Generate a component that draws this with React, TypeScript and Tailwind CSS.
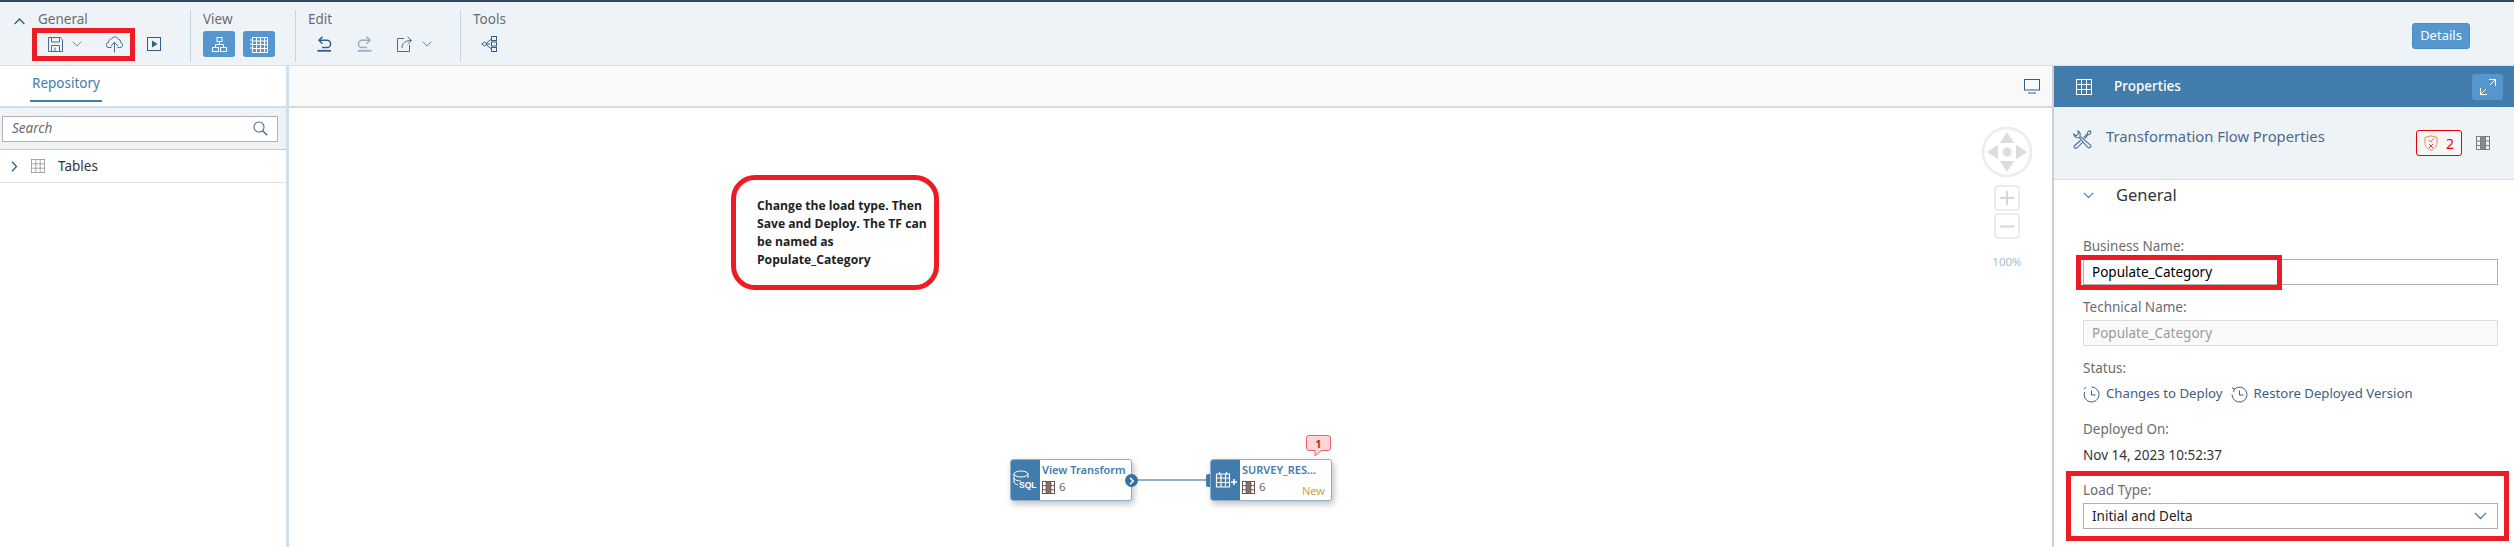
const ff = "font-['Noto_Sans','Open_Sans',sans-serif]";

function Save() {
  return (
    <svg width="15" height="15" viewBox="0 0 15 15" fill="none" stroke="#4a6f94" strokeWidth="1">
      <path d="M.5.500h12l2 2v12H.5z" />
      <path d="M3.500.500v4.500h8V.500M3.500 14.500V8.500h8v6M7 10.500v4" />
    </svg>
  );
}
function Chevron({ c = "#6b8bab", w = 10 }: { c?: string; w?: number }) {
  return (
    <svg width={w} height={w * 0.6} viewBox="0 0 10 6" fill="none" stroke={c} strokeWidth="1">
      <path d="M.7.700 5 5l4.300-4.300" />
    </svg>
  );
}
function Cloud() {
  return (
    <svg width="17" height="17" viewBox="0 0 17 17" fill="none" stroke="#4a6f94" strokeWidth="1">
      <path d="M5.500 11.500H3a2.500 2.500 0 0 1-.5-5A3 3 0 0 1 5.500 3a3.500 3.500 0 0 1 6.500 0 3 3 0 0 1 2.500 3.500 2.500 2.500 0 0 1-1 5h-2" />
      <path d="M8.500 16.500V6.500M5 10l3.500-3.500L12 10" />
    </svg>
  );
}
function Run() {
  return (
    <svg width="14" height="14" viewBox="0 0 14 14" fill="none">
      <rect x=".5" y=".5" width="13" height="13" stroke="#2f5f8c" />
      <path d="M5 3.500 10.500 7 5 10.500z" fill="#2f5f8c" />
    </svg>
  );
}
function OrgChart() {
  return (
    <svg width="15" height="15" viewBox="0 0 15 15" fill="none" stroke="white" strokeWidth="1">
      <rect x="5" y=".5" width="5" height="4" />
      <rect x=".5" y="10.500" width="6" height="4" />
      <rect x="8.500" y="10.500" width="6" height="4" />
      <path d="M7.500 4.500v3M3.500 10.500v-3h8v3" />
    </svg>
  );
}
function GridIcon({ c = "white", s = 16 }: { c?: string; s?: number }) {
  return (
    <svg width={s} height={s} viewBox="0 0 16 16" fill="none" stroke={c} strokeWidth="1">
      <rect x=".5" y=".5" width="15" height="15" />
      <path d="M5.500.500v15M10.500.500v15M.5 5.500h15M.5 10.500h15" />
    </svg>
  );
}
function TableNotes() {
  return (
    <svg width="18" height="17" viewBox="0 0 18 17" fill="none" stroke="white">
      <path d="M2.500 1.500h15v15h-15zM2.500 5h15M2.500 8.500h15M2.500 12.500h15M6.500 1.500v15M10.500 1.500v15M14.500 1.500v15" />
      <path d="M1 3v2M1 7v2M1 11v2" />
    </svg>
  );
}
function Undo() {
  return (
    <svg width="15" height="16" viewBox="0 0 15 16" fill="none" stroke="#2f5f8c" strokeWidth="1.500">
      <path d="M5.500.800 2 4.300l3.500 3.500" />
      <path d="M2 4.300h8a3.600 3.600 0 0 1 0 7.200H5" />
      <path d="M.5 14.800h13.500" strokeWidth="1.800" />
    </svg>
  );
}
function Redo() {
  return (
    <svg width="15" height="16" viewBox="0 0 15 16" fill="none" stroke="#94aec5" strokeWidth="1.500">
      <path d="M9.500.800 13 4.300 9.500 7.800" />
      <path d="M13 4.300H5a3.600 3.600 0 0 0 0 7.200h5" />
      <path d="M1 14.800h13.500" strokeWidth="1.800" />
    </svg>
  );
}
function Share() {
  return (
    <svg width="16" height="16" viewBox="0 0 16 16" fill="none" stroke="#4a6f94">
      <path d="M7 2.500H.5v13h12V9" />
      <path d="M5 12c0-4.500 3-7.500 9-7.500M10.500.800 14.500 4.500l-4 3.700" />
    </svg>
  );
}
function Lineage() {
  return (
    <svg width="16" height="16" viewBox="0 0 16 16" fill="none" stroke="#2f5f8c">
      <path d="M.8 8 3.500 6 6.200 8 3.500 10zM6.200 8h3" />
      <rect x="10.500" y=".5" width="5" height="4" />
      <rect x="10.500" y="6" width="5" height="4" />
      <rect x="10.500" y="11.500" width="5" height="4" />
      <path d="M5.500 7 10.500 3M5.500 9l5 4" />
    </svg>
  );
}
function Search() {
  return (
    <svg width="15" height="15" viewBox="0 0 15 15" fill="none" stroke="#4a6f94" strokeWidth="1.100">
      <circle cx="6" cy="6" r="5" />
      <path d="m9.700 9.700 4.500 4.500" strokeWidth="1.500" />
    </svg>
  );
}
function Monitor() {
  return (
    <svg width="16" height="15" viewBox="0 0 16 15" fill="none" stroke="#2f5f8c">
      <rect x=".5" y=".5" width="15" height="10.500" />
      <path d="M4 14h8" />
    </svg>
  );
}
function Expand() {
  return (
    <svg width="16" height="16" viewBox="0 0 16 16" fill="none" stroke="white">
      <path d="M9 .5h6.500V7M15.500.5 10 6M7 15.500H.5V9M.5 15.500 6 10" />
    </svg>
  );
}
function Tools() {
  return (
    <svg width="19" height="19" viewBox="0 0 19 19" fill="none" stroke="#4a6f94" strokeWidth="1.100">
      <path d="M5 1a3.800 3.800 0 0 1 1.800 5.200L17.500 15a1.800 1.800 0 0 1-2.500 2.500L6 7.500A3.800 3.800 0 0 1 .8 4L3 6l2.400-2.200z" />
      <path d="M7.500 10.500 1.700 15.500a1.500 1.500 0 0 0 2.300 2.300L9.500 12.300M10.500 7.800l4-4.300.5-1.800L17 .800l1 1.500-1.200 1.900-1.800.5-3.200 4" />
    </svg>
  );
}
function Shield() {
  return (
    <svg width="14" height="16" viewBox="0 0 14 16" fill="none" stroke="#e8433a">
      <path d="M7 .8 13 2.500v6c0 3-3 5.500-6 7-3-1.500-6-4-6-7v-6z" stroke="#ef8a3a" />
      <path d="m4.500 4.800 2 2L10 3.500M5 9l4 4M9 9l-4 4" />
    </svg>
  );
}
function Film({ c = "#7d7d7d", s = 14, mid = "#8a8a8a", line = "#7d7d7d" }: { c?: string; s?: number; mid?: string; line?: string }) {
  return (
    <svg width={s} height={s} viewBox="0 0 14 14" fill="none">
      <rect x="4.500" y=".5" width="5" height="13" fill={mid} />
      <rect x=".5" y=".5" width="13" height="13" stroke={c} />
      <path d="M4.500.500v13M9.500.500v13M.5 5h4M.5 9.500h4M9.500 5h4M9.500 9.500h4" stroke={line} />
    </svg>
  );
}
function Clock() {
  return (
    <svg width="17" height="17" viewBox="0 0 17 17" fill="none" stroke="#3f5e7f">
      <path d="M8.500 1a7.500 7.500 0 1 1-7 5" />
      <path d="M8.500 4.500v4.500h4" />
      <path d="M1 3.500 3 1" />
    </svg>
  );
}
function Restore() {
  return (
    <svg width="17" height="17" viewBox="0 0 17 17" fill="none" stroke="#3f5e7f">
      <path d="M3.500 3A7.500 7.500 0 1 1 1 8.500" />
      <path d="M.8 1.500 3.500 3 2.500 6M8.500 4.500V9h4" />
    </svg>
  );
}
function Sql() {
  return (
    <svg width="25" height="20" viewBox="0 0 25 20" fill="none" stroke="white">
      <ellipse cx="8" cy="4" rx="7" ry="3" />
      <path d="M1 4v8c0 1.500 2 2.500 4 2.800M15 4v4M1 8c0 1.500 3 3 7 3" />
      <text x="6" y="18" fontSize="8.500" fontWeight="700" fill="white" stroke="none" fontFamily="Liberation Sans, sans-serif">SQL</text>
    </svg>
  );
}
function TablePlus() {
  return (
    <svg width="22" height="18" viewBox="0 0 22 18" fill="none" stroke="white" strokeWidth="1.200">
      <path d="M1.500 3h13v13h-13zM1.500 7h13M1.500 11.500h13M6 3v13M10.500 3v13M4.500 1v3M11.500 1v3" />
      <path d="M16 11h6M19 8v6" strokeWidth="1.500" />
    </svg>
  );
}
function Nav() {
  return (
    <svg width="52" height="52" viewBox="0 0 52 52" fill="#dcdcdc">
      <circle cx="26" cy="26" r="24" fill="none" stroke="#ececec" strokeWidth="2.500" />
      <circle cx="26" cy="26" r="4.500" />
      <path d="M26 6l7 11H19zM26 46l-7-11h14zM6 26l11-7v14zM46 26l-11 7V19z" />
    </svg>
  );
}

function Group({ label, className, children }: { label: string; className: string; children: React.ReactNode }) {
  return (
    <div className={`flex h-[52px] flex-col border-r border-[#c9d3dc] ${className}`}>
      <div className="text-[13.500px] leading-[18px] text-[#6a6d70]">{label}</div>
      <div className="mt-[3px] flex h-[26px] items-center">{children}</div>
    </div>
  );
}

function Field({ label, children }: { label: string; children: React.ReactNode }) {
  return (
    <div className="flex h-[61px] flex-col">
      <div className="flex h-[26px] items-center pt-[1px] text-[13.500px] text-[#6a6d70]">{label}</div>
      {children}
    </div>
  );
}

function Node({ className, icon, title, badge }: { className: string; icon: React.ReactNode; title: string; badge?: boolean }) {
  return (
    <div className={`absolute top-[351px] flex h-[42px] w-[122px] overflow-hidden rounded-[3px] border border-[#8fb0cc] bg-white shadow-[2px_3px_6px_rgba(0,0,0,0.25)] ${className}`}>
      <div className="flex w-[29px] shrink-0 items-center justify-center bg-[#427cac]">{icon}</div>
      <div className="relative flex-1 pl-[2px]">
        <div className="whitespace-nowrap pt-[1px] text-[11px] font-semibold leading-[17px] text-[#427cac]">{title}</div>
        <div className="mt-[2px] flex items-center gap-[4px] text-[11.500px] leading-[14px] text-[#6a6d70]">
          <Film c="#5f5048" s={13} mid="#8a6f5f" line="#5f5048" />
          6
        </div>
        {badge && <div className="absolute bottom-[2px] right-[6px] text-[11px] leading-[14px] text-[#d3a04a]">New</div>}
      </div>
    </div>
  );
}

export default function App() {
  return (
    <div className={`relative flex h-[547px] w-[2514px] flex-col overflow-hidden bg-white ${ff}`}>
      <div className="h-[2px] bg-[#2f4560]" />
      <div className="flex h-[64px] shrink-0 items-start border-b border-[#d3e0ec] bg-[#eef3f8] pt-[8px]">
        <div className="flex w-[38px] justify-center pt-[8px]">
          <svg width="11" height="7" viewBox="0 0 11 7" fill="none" stroke="#2f5f8c" strokeWidth="1.400"><path d="M.7 6 5.500 1l4.800 5" /></svg>
        </div>
        <Group label="General" className="w-[153px]">
          <span className="ml-[10px] flex items-center"><Save /></span>
          <span className="ml-[9px]"><Chevron /></span>
          <span className="ml-[24px]"><Cloud /></span>
          <span className="ml-[24px]"><Run /></span>
        </Group>
        <Group label="View" className="w-[105px] pl-[12px]">
          <span className="flex h-[26px] w-[32px] items-center justify-center rounded-[3px] bg-[#5496cd]"><OrgChart /></span>
          <span className="ml-[8px] flex h-[26px] w-[32px] items-center justify-center rounded-[3px] bg-[#5496cd]"><TableNotes /></span>
        </Group>
        <Group label="Edit" className="w-[165px] pl-[12px]">
          <span className="ml-[9px]"><Undo /></span>
          <span className="ml-[25px]"><Redo /></span>
          <span className="ml-[25px]"><Share /></span>
          <span className="ml-[9px]"><Chevron /></span>
        </Group>
        <div className="flex h-[52px] flex-col pl-[12px]">
          <div className="text-[13.500px] leading-[18px] text-[#6a6d70]">Tools</div>
          <div className="mt-[3px] flex h-[26px] items-center pl-[8px]"><Lineage /></div>
        </div>
        <div className="ml-auto mr-[44px] mt-[13px] flex h-[26px] w-[58px] items-center justify-center rounded-[3px] border border-[#4a8cc4] bg-[#5496cd] text-[13px] text-white">Details</div>
      </div>

      <div className="flex min-h-0 flex-1">
        <div className="flex w-[289px] shrink-0 flex-col border-r-[3px] border-[#d0dfec]">
          <div className="h-[42px] shrink-0 border-b-[2px] border-[#d0dfec] pl-[30px]">
            <div className="flex h-[36px] w-[72px] items-center justify-center border-b-[2px] border-[#427cac] text-[13.500px] text-[#427cac]">Repository</div>
          </div>
          <div className="flex h-[42px] shrink-0 items-center border-b border-[#c8c8c8] bg-[#eef3f8] pl-[2px] pr-[8px]">
            <div className="flex h-[26px] w-full items-center justify-between border border-[#b0b0b0] bg-white pl-[9px] pr-[9px]">
              <span className="text-[13.500px] italic text-[#6a6d70]">Search</span>
              <Search />
            </div>
          </div>
          <div className="flex h-[33px] shrink-0 items-center border-b border-[#e5e5e5]">
            <svg className="ml-[11px]" width="7" height="11" viewBox="0 0 7 11" fill="none" stroke="#2f5f8c" strokeWidth="1.300"><path d="m1 .8 4.500 4.700L1 10.200" /></svg>
            <span className="ml-[13px]"><GridIcon c="#9a9a9a" s={14} /></span>
            <span className="ml-[13px] text-[13.500px] text-[#32363a]">Tables</span>
          </div>
        </div>

        <div className="flex min-w-0 flex-1 flex-col">
          <div className="flex h-[42px] shrink-0 items-center justify-end border-b-[2px] border-[#d9d9d9] bg-[#f9f9f9] pr-[14px]"><Monitor /></div>
          <div className="relative flex-1">
            <div className="absolute left-[442px] top-[67px] h-[115px] w-[208px] rounded-[24px] border-[5px] border-[#ed1c24] bg-white pl-[21px] pt-[17px] font-['Open_Sans',sans-serif] text-[12.150px] font-bold leading-[18px] text-[#222]">
              Change the load type. Then<br />Save and Deploy. The TF can<br />be named as<br />Populate_Category
            </div>

            <Node className="left-[721px]" icon={<Sql />} title="View Transform" />
            <Node className="left-[921px]" icon={<TablePlus />} title="SURVEY_RES..." badge />
            <div className="absolute left-[843px] top-[371px] h-[2px] w-[75px] bg-[#8fb0cc]" />
            <div className="absolute left-[836px] top-[366px] flex h-[13px] w-[13px] items-center justify-center rounded-full bg-[#2f72a8]">
              <svg width="6" height="8" viewBox="0 0 6 8" fill="none" stroke="white" strokeWidth="1.500"><path d="M1 .8 4.200 4 1 7.200" /></svg>
            </div>
            <div className="absolute left-[917px] top-[366px] h-[13px] w-[4px] rounded-l-[2px] bg-[#427cac]" />
            <div className="absolute left-[1017px] top-[327px] flex h-[16px] w-[25px] items-center justify-center rounded-[3px] border border-[#f0616a] bg-[#fdd7d7] text-[11px] font-bold leading-none text-[#d91c24]">1</div>
            <svg className="absolute left-[1025px] top-[342px]" width="9" height="7" viewBox="0 0 9 7"><path d="M1 0 1 6 8 0" fill="#fdd7d7" stroke="#f0616a" /></svg>

            <div className="absolute left-[1692px] top-[18px] flex w-[52px] flex-col items-center">
              <Nav />
              <div className="mt-[7px] flex h-[26px] w-[26px] items-center justify-center rounded-[4px] border-2 border-[#ececec]">
                <svg width="14" height="14" viewBox="0 0 14 14" stroke="#d6d6d6" strokeWidth="2"><path d="M0 7h14M7 0v14" /></svg>
              </div>
              <div className="mt-[2px] flex h-[26px] w-[26px] items-center justify-center rounded-[4px] border-2 border-[#ececec]">
                <svg width="14" height="3" viewBox="0 0 14 3" stroke="#d6d6d6" strokeWidth="2"><path d="M0 1.500h14" /></svg>
              </div>
              <div className="mt-[15px] text-[11.500px] leading-[16px] text-[#a6bbcf]">100%</div>
            </div>

            <div className="absolute bottom-0 right-0 top-[-42px] w-[2px] bg-[#cfcfcf]" />
          </div>
        </div>

        <div className="flex w-[460px] shrink-0 flex-col">
          <div className="flex h-[41px] shrink-0 items-center bg-[#427cac] pl-[22px] pr-[11px]">
            <GridIcon s={16} />
            <span className="ml-[22px] text-[13.500px] font-medium text-white">Properties</span>
            <span className="ml-auto flex h-[26px] w-[31px] items-center justify-center rounded-[3px] bg-[#5496cd]"><Expand /></span>
          </div>
          <div className="flex h-[73px] shrink-0 items-center border-b border-[#d0dfec] bg-[#eef3f8] pl-[19px] pr-[24px]">
            <span className="-mt-[7px]"><Tools /></span>
            <span className="-mt-[14px] ml-[14px] text-[14.800px] text-[#4a6a8a]">Transformation Flow Properties</span>
            <span className="ml-auto flex h-[26px] w-[46px] items-center justify-center gap-[8px] rounded-[3px] border border-[#ee0000] bg-[#f7f7f7] text-[14px] text-[#e00]"><Shield />2</span>
            <span className="ml-[14px]"><Film /></span>
          </div>
          <div className="flex-1 pl-[29px] pr-[16px]">
            <div className="flex h-[53px] items-center pb-[23px]">
              <Chevron c="#427cac" w={11} />
              <span className="ml-[22px] text-[16.500px] text-[#32363a]">General</span>
            </div>
            <Field label="Business Name:">
              <div className="flex h-[26px] items-center border border-[#b0b0b0] bg-white pl-[8px] text-[13.500px] text-black">Populate_Category</div>
            </Field>
            <Field label="Technical Name:">
              <div className="flex h-[26px] items-center border border-[#dcdcdc] bg-[#fafafa] pl-[8px] text-[13.500px] text-[#9a9a9a]">Populate_Category</div>
            </Field>
            <Field label="Status:">
              <div className="flex h-[26px] items-center text-[13.200px] text-[#3f5e7f]">
                <Clock />
                <span className="ml-[6px]">Changes to Deploy</span>
                <span className="ml-[8px]"><Restore /></span>
                <span className="ml-[6px]">Restore Deployed Version</span>
              </div>
            </Field>
            <Field label="Deployed On:">
              <div className="flex h-[26px] items-center text-[13.500px] text-[#32363a]">Nov 14, 2023 10:52:37</div>
            </Field>
            <Field label="Load Type:">
              <div className="flex h-[26px] items-center justify-between border border-[#b0b0b0] bg-white pl-[8px] pr-[10px] text-[13.500px] text-[#222]">
                Initial and Delta
                <Chevron c="#427cac" w={13} />
              </div>
            </Field>
          </div>
        </div>
      </div>

      <div className="absolute left-[32px] top-[28px] h-[33px] w-[103px] border-[5px] border-[#ed1c24]" />
      <div className="absolute left-[2076px] top-[255px] h-[35px] w-[206px] border-[5px] border-[#ed1c24]" />
      <div className="absolute left-[2066px] top-[471px] h-[70px] w-[443px] border-[5px] border-[#ed1c24]" />
    </div>
  );
}
